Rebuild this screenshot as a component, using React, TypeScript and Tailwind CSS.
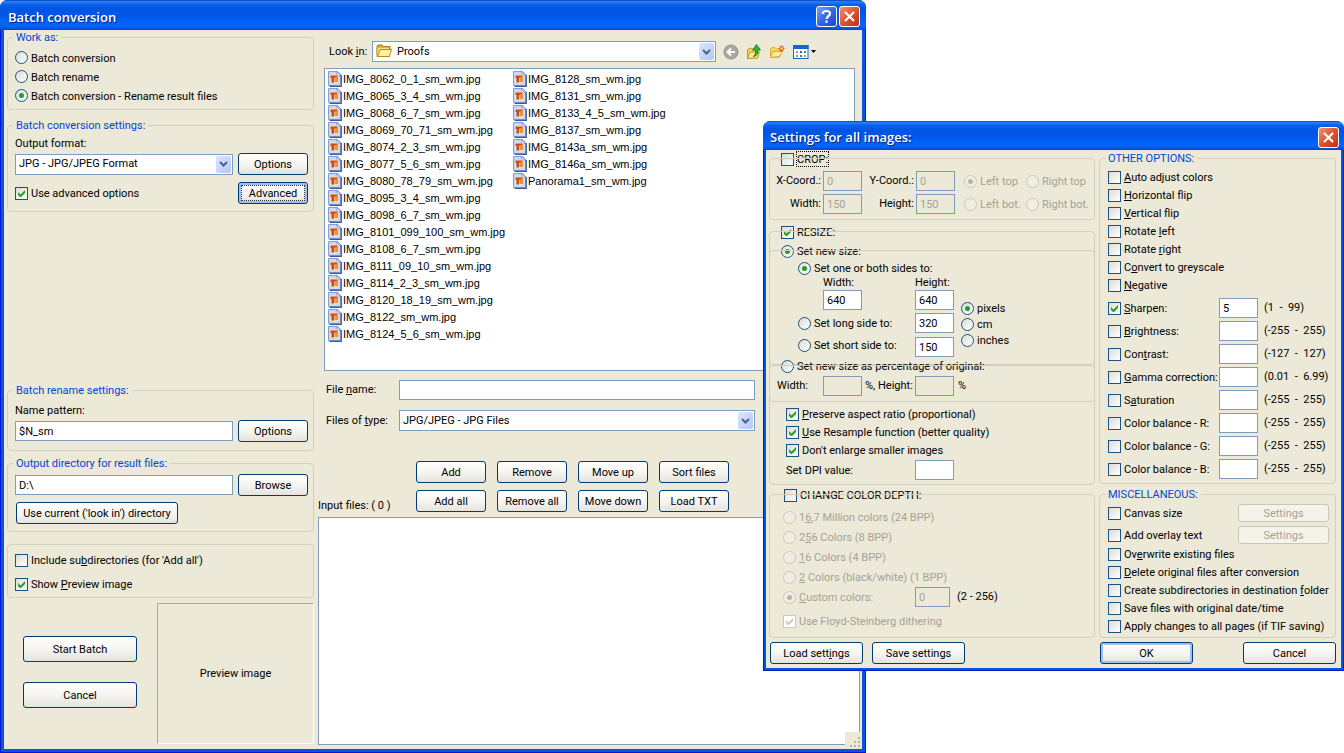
import { useId } from 'react'
import type { ReactNode } from 'react'

const files = [
  'IMG_8062_0_1_sm_wm.jpg', 'IMG_8065_3_4_sm_wm.jpg', 'IMG_8068_6_7_sm_wm.jpg', 'IMG_8069_70_71_sm_wm.jpg',
  'IMG_8074_2_3_sm_wm.jpg', 'IMG_8077_5_6_sm_wm.jpg', 'IMG_8080_78_79_sm_wm.jpg', 'IMG_8095_3_4_sm_wm.jpg',
  'IMG_8098_6_7_sm_wm.jpg', 'IMG_8101_099_100_sm_wm.jpg', 'IMG_8108_6_7_sm_wm.jpg', 'IMG_8111_09_10_sm_wm.jpg',
  'IMG_8114_2_3_sm_wm.jpg', 'IMG_8120_18_19_sm_wm.jpg', 'IMG_8122_sm_wm.jpg', 'IMG_8124_5_6_sm_wm.jpg',
  'IMG_8128_sm_wm.jpg', 'IMG_8131_sm_wm.jpg', 'IMG_8133_4_5_sm_wm.jpg', 'IMG_8137_sm_wm.jpg',
  'IMG_8143a_sm_wm.jpg', 'IMG_8146a_sm_wm.jpg', 'Panorama1_sm_wm.jpg',
]

const flips = ['&Auto adjust colors', '&Horizontal flip', '&Vertical flip', 'Rotate &left', 'Rotate &right', 'C&onvert to greyscale', '&Negative']

const adjustments = [
  { label: '&Sharpen:', value: '5', range: '(1  -  99)', on: true },
  { label: '&Brightness:', value: '', range: '(-255  -  255)' },
  { label: 'Con&trast:', value: '', range: '(-127  -  127)' },
  { label: '&Gamma correction:', value: '', range: '(0.01  -  6.99)' },
  { label: 'S&aturation', value: '', range: '(-255  -  255)' },
  { label: 'Color balance - R:', value: '', range: '(-255  -  255)' },
  { label: 'Color balance - G:', value: '', range: '(-255  -  255)' },
  { label: 'Color balance - B:', value: '', range: '(-255  -  255)' },
]

const misc = ['Ov&erwrite existing files', '&Delete original files after conversion', 'Create subdirectories in destination &folder', 'Save files with original date/time', 'Apply changes to all pages (if TIF saving)']

const depths = ['1&6,7 Million colors (24 BPP)', '2&56 Colors (8 BPP)', '&16 Colors (4 BPP)', '&2 Colors (black/white) (1 BPP)', '&Custom colors:']

// the letter after "&" is the underlined access key
function Mnemonic({ text }: { text: string }) {
  const i = text.indexOf('&')
  if (i < 0) return <>{text}</>
  return <>{text.slice(0, i)}<u className="underline-offset-1">{text[i + 1]}</u>{text.slice(i + 2)}</>
}

type ChoiceProps = { label: string; on?: boolean; disabled?: boolean; focused?: boolean; name?: string; className?: string }

function Check({ label, on, disabled, focused, className = '' }: ChoiceProps) {
  return (
    <label className={`flex items-center gap-[3px] whitespace-nowrap ${disabled ? 'text-[#a5a295]' : ''} ${className}`}>
      <span className="relative flex size-[13px] shrink-0">
        <input type="checkbox" defaultChecked={on} disabled={disabled} className="peer size-[13px] appearance-none border border-[#1c5180] bg-linear-to-br from-[#dcdcd7] to-white disabled:border-[#cac8bb] disabled:from-white" />
        <svg viewBox="0 0 13 13" className={`pointer-events-none absolute inset-0 hidden size-[13px] peer-checked:block ${disabled ? 'text-[#cac8bb]' : 'text-[#21a121]'}`}>
          <path d="M3 5v3l2 2h1l4-4V3L5.500 7.500z" fill="currentColor" />
        </svg>
      </span>
      <span className={`pt-[2px] ${focused ? 'leading-3 outline-1 outline-dotted outline-black' : ''}`}><Mnemonic text={label} /></span>
    </label>
  )
}

function Radio({ label, on, disabled, name, className = '' }: ChoiceProps) {
  return (
    <label className={`flex items-center gap-[3px] whitespace-nowrap ${disabled ? 'text-[#a5a295]' : ''} ${className}`}>
      <span className="relative flex size-[13px] shrink-0">
        <input type="radio" name={name} defaultChecked={on} disabled={disabled} className="peer size-[13px] appearance-none rounded-full border border-[#1c5180] bg-linear-to-br from-[#dcdcd7] to-white disabled:border-[#cac8bb] disabled:from-[#f0eee2] disabled:to-[#f0eee2]" />
        <span className={`pointer-events-none absolute top-1 left-1 hidden size-[5px] rounded-full peer-checked:block ${disabled ? 'bg-[#b5b3a6]' : 'bg-[#21a121]'}`} />
      </span>
      <span className="pt-[2px]"><Mnemonic text={label} /></span>
    </label>
  )
}

function Button({ children, className = '', active, disabled, focused }: { children: ReactNode; className?: string; active?: boolean; disabled?: boolean; focused?: boolean }) {
  const look = disabled
    ? 'border-[#c9c7ba] bg-[#f5f4ea] text-[#a5a295]'
    : 'border-[#003c74] bg-linear-to-b from-white via-[#f6f5f1] to-[#e6e3dc]'
  return (
    <button type="button" disabled={disabled} className={`relative rounded-[3px] border pt-px text-center whitespace-nowrap ${look} ${active ? 'inset-shadow-[0_0_0_2px_#a3bdf0]' : ''} ${className}`}>
      {children}
      {focused && <span className="absolute inset-[2px] border border-dotted border-[#333]" />}
    </button>
  )
}

function TextBox({ value = '', label, id, disabled, className = '' }: { value?: string; label?: string; id?: string; disabled?: boolean; className?: string }) {
  return <input type="text" id={id} aria-label={label} defaultValue={value} disabled={disabled} className={`h-5 min-w-0 border border-[#7f9db9] bg-white px-[3px] disabled:bg-[#ece9d8] disabled:text-[#a5a295] ${className}`} />
}

function Combo({ value, label, id, icon, className = '' }: { value: string; label?: string; id?: string; icon?: ReactNode; className?: string }) {
  return (
    <span className={`relative flex h-[21px] min-w-0 flex-1 ${className}`}>
      <select id={id} aria-label={label} className={`w-full appearance-none border border-[#7f9db9] bg-white ${icon ? 'pl-6' : 'pl-[3px]'}`}>
        <option>{value}</option>
      </select>
      {icon && <span className="pointer-events-none absolute top-[2px] left-1">{icon}</span>}
      <span className="pointer-events-none absolute top-[2px] right-[2px] flex h-[17px] w-[15px] items-center justify-center rounded-[2px] bg-linear-to-br from-[#dbe5fd] to-[#b4c8f6]">
        <svg viewBox="0 0 9 6" className="h-[6px] w-[9px]"><path d="M1 1l3.500 3.500L8 1" fill="none" stroke="#4d6185" strokeWidth="2" /></svg>
      </span>
    </span>
  )
}

function Group({ title, header, children, className = '' }: { title?: string; header?: ReactNode; children: ReactNode; className?: string }) {
  return (
    <fieldset className={`relative min-w-0 border border-transparent ${className}`}>
      {header && <div className="absolute -top-2 left-0">{header}</div>}
      <span className="pointer-events-none absolute -inset-px rounded-[4px] border border-[#d0d0bf]" />
      {title && <legend className="absolute -top-[7px] left-[5px] bg-[#ece9d8] px-[3px] leading-[14px] text-[#0046d5]">{title}</legend>}
      {children}
    </fieldset>
  )
}

function CaptionButton({ kind }: { kind: 'help' | 'close' }) {
  return (
    <button type="button" aria-label={kind} className={`size-[21px] rounded-[3px] border border-white ${kind === 'close' ? 'bg-linear-to-br from-[#f0906f] via-[#e0522c] to-[#b93413]' : 'bg-linear-to-br from-[#7a9ff5] via-[#3567e8] to-[#1c46c5]'}`}>
      {kind === 'close' ? (
        <svg viewBox="0 0 19 19" className="size-[19px]"><path d="M5 5l9 9M14 5l-9 9" stroke="#fff" strokeWidth="2.200" /></svg>
      ) : (
        <svg viewBox="0 0 19 19" className="size-[19px]" fill="none" stroke="#fff" strokeWidth="2.200"><path d="M6 7V6q0-2 3.500-2T13 6.500q0 1.500-1.500 2.500T9.500 12M9.500 13.500v2.300" /></svg>
      )}
    </button>
  )
}

function TitleBar({ title, help, className = '' }: { title: string; help?: boolean; className?: string }) {
  return (
    <header className={`flex items-center gap-[2px] rounded-t-[7px] bg-[linear-gradient(180deg,#0a3fbd_0%,#2b83f5_6%,#0a62ea_14%,#0054e3_30%,#0058ea_55%,#0066fe_80%,#0061f5_90%,#0045c8_100%)] pt-[3px] ${className}`}>
      <h1 className="flex-1 font-['Open_Sans',sans-serif] text-[13px] font-semibold text-white [text-shadow:1px_1px_1px_#0b1f7a]">{title}</h1>
      {help && <CaptionButton kind="help" />}
      <CaptionButton kind="close" />
    </header>
  )
}

function FolderIcon() {
  return (
    <svg viewBox="0 0 16 16" className="size-4">
      <path d="M1 3.500L2 2h4l1.500 1.500H14V6H4L1.500 13z" fill="#e8bf3d" stroke="#a87c12" />
      <path d="M1 13.500V5l1-1h11.500v9.500z" fill="#fbe27a" stroke="#b98d1c" />
      <path d="M1.500 13.500L4 6.500h11.500l-2 7z" fill="#fff0a0" stroke="#b98d1c" />
    </svg>
  )
}

function FileIcon() {
  return (
    <svg viewBox="0 0 14 16" className="h-4 w-[14px] shrink-0">
      <path d="M.5.5h9L12.500 3.500v11H.5z" fill="#c5d9f8" stroke="#7f9fdc" />
      <path d="M9 .5v3.500h3.500z" fill="#fff" stroke="#5f83c6" strokeWidth=".8" />
      <rect x="2" y="3.500" width="8.500" height="9" fill="#f7dcc0" />
      <path d="M2.500 4.500h7v2.500h-7z" fill="#d8481a" />
      <path d="M3.500 7h2.500v4.500H3.500z" fill="#a8553a" />
      <path d="M6.500 6h3.500v5H6.500z" fill="#ef9030" />
      <path d="M13.300 4v11.300H1.500" fill="none" stroke="#3f5a92" strokeWidth="1.200" />
    </svg>
  )
}

function LookInTools() {
  return (
    <div className="ml-[7px] flex items-center gap-[7px]">
      <button type="button" aria-label="Back">
        <svg viewBox="0 0 16 16" className="size-4">
          <circle cx="8" cy="8" r="7" fill="#a8a8a4" stroke="#8e8e8a" />
          <path d="M12 8H5M8 4.500L4.500 8 8 11.500" fill="none" stroke="#fff" strokeWidth="2" />
        </svg>
      </button>
      <button type="button" aria-label="Up one level">
        <svg viewBox="0 0 16 16" className="size-4">
          <path d="M1.500 14.500V5.500L5 4l1.500 1H11v9z" fill="#f5d460" stroke="#c79a20" />
          <path d="M1.500 14.500L4 8h9.500l-2 6z" fill="#fdeb99" stroke="#c79a20" />
          <path d="M7 12.500q3-1 2.500-6.500H6.500L10.500.5l4 5.500h-2.500q.5 6-5 6.500z" fill="#35b32d" stroke="#14761a" strokeWidth=".8" />
        </svg>
      </button>
      <button type="button" aria-label="Create new folder">
        <svg viewBox="0 0 16 16" className="size-4">
          <path d="M1.500 13.500V5L3 3.500h3L7.500 5H11v8z" fill="#f5d460" stroke="#e0a93a" />
          <path d="M1.500 13.500L4 7.500h9.500l-3 5z" fill="#fdeb99" stroke="#e0a93a" />
          <path d="M12.500 1.500v6M9.500 4.500h6M10.500 2.500l4 4M14.500 2.500l-4 4" stroke="#e8581c" strokeWidth="1.200" />
          <circle cx="12.500" cy="4.500" r="1.300" fill="#ffdf70" />
        </svg>
      </button>
      <button type="button" aria-label="View menu" className="ml-px flex items-center gap-[2px]">
        <svg viewBox="0 0 16 16" className="size-4">
          <rect x=".5" y="1.500" width="14.500" height="13" fill="#fff" stroke="#1665d8" />
          <path d="M0 1h15.500v4H0z" fill="#1665d8" />
          <path d="M3 7h2v2H3z" fill="#8d9cb8" /><path d="M7 7h2v2H7z" fill="#2b62c4" /><path d="M11 7h2v2h-2z" fill="#39a23a" />
          <path d="M3 11h2v2H3z" fill="#8d9cb8" /><path d="M7 11h2v2H7z" fill="#3e9a4a" /><path d="M11 11h2v2h-2z" fill="#d8a021" />
        </svg>
        <svg viewBox="0 0 5 3" className="h-[3px] w-[5px]"><path d="M0 0h5L2.500 3z" /></svg>
      </button>
    </div>
  )
}

function BatchWindow() {
  const id = useId()
  return (
    <section className="mr-[478px] flex min-h-screen flex-col rounded-t-[8px] bg-[#0019cf]">
      <TitleBar title="Batch conversion" help className="h-[30px] pr-[6px] pl-2" />
      <div className="mx-px mb-px flex flex-1 border-x-[3px] border-b-[3px] border-[#0855dd] bg-[#ece9d8]">
        <div className="flex w-[310px] shrink-0 flex-col pt-[7px] pl-[3px]">
          <Group title="Work as:" className="pt-[10px] pb-1 pl-[7px]">
            <Radio name="work" label="Batch conversion" className="h-[19px]" />
            <Radio name="work" label="Batch rename" className="h-[19px]" />
            <Radio name="work" label="Batch conversion - Rename result files" on className="h-[19px]" />
          </Group>
          <Group title="Batch conversion settings:" className="mt-[15px] pt-[9px] pr-[5px] pb-[7px] pl-[7px]">
            <label htmlFor={id + 'fmt'} className="block h-4 pt-px">Output format:</label>
            <div className="mt-[2px] flex items-center gap-[5px]">
              <Combo id={id + 'fmt'} value="JPG - JPG/JPEG Format" />
              <Button className="h-[22px] w-[70px]">Options</Button>
            </div>
            <div className="mt-[7px] flex items-center justify-between">
              <Check label="Use advanced options" on />
              <Button active focused className="h-[22px] w-[70px]">Advanced</Button>
            </div>
          </Group>
          <Group title="Batch rename settings:" className="mt-[178px] pt-[11px] pr-[5px] pb-2 pl-[7px]">
            <label htmlFor={id + 'pat'} className="block h-4 pt-px">Name pattern:</label>
            <div className="mt-[2px] flex items-center gap-[5px]">
              <TextBox id={id + 'pat'} value="$N_sm" className="flex-1" />
              <Button className="h-[22px] w-[70px]">Options</Button>
            </div>
          </Group>
          <Group title="Output directory for result files:" className="mt-3 pt-[10px] pr-[5px] pb-[7px] pl-[7px]">
            <div className="flex items-center gap-[5px]">
              <TextBox label="Output directory" value="D:\" className="flex-1" />
              <Button className="h-[22px] w-[70px]">Browse</Button>
            </div>
            <Button className="mt-[6px] ml-px h-[22px] w-[162px]">Use current ('look in') directory</Button>
          </Group>
          <Group className="mt-3 pt-[3px] pb-px pl-[7px]">
            <Check label="Include su&bdirectories (for 'Add all')" className="h-6" />
            <Check label="Show &Preview image" on className="h-6" />
          </Group>
          <div className="mt-[5px] mb-[5px] flex flex-1">
            <div className="flex flex-1 flex-col items-center gap-5 pt-[33px] pr-1">
              <Button className="h-[26px] w-[114px]">Start Batch</Button>
              <Button className="h-[26px] w-[114px]">Cancel</Button>
            </div>
            <div className="flex w-[157px] items-center justify-center border border-t-[#aca899] border-r-white border-b-white border-l-[#aca899] pt-px">Preview image</div>
          </div>
        </div>

        <div className="relative flex min-w-0 flex-1 flex-col pt-[11px] pl-1">
          <div className="flex items-center pr-[46px] pl-[11px]">
            <label htmlFor={id + 'look'} className="w-[43px]"><Mnemonic text="Look &in:" /></label>
            <Combo id={id + 'look'} value="Proofs" icon={<FolderIcon />} />
            <LookInTools />
          </div>
          <ul className="mt-[6px] mr-[7px] ml-[6px] grid h-[303px] auto-cols-[185px] grid-flow-col grid-rows-[repeat(16,17px)] border border-[#7f9db9] bg-white pt-px pl-[3px] font-['Liberation_Sans',sans-serif]">
            {files.map((f) => (
              <li key={f} className="flex items-center gap-px whitespace-nowrap"><FileIcon />{f}</li>
            ))}
          </ul>
          <div className="mt-[9px] mr-[107px] flex items-center pl-2">
            <label htmlFor={id + 'file'} className="w-[73px]"><Mnemonic text="File &name:" /></label>
            <TextBox id={id + 'file'} className="flex-1" />
          </div>
          <div className="mt-[10px] mr-[107px] flex items-center pl-2">
            <label htmlFor={id + 'type'} className="w-[73px]"><Mnemonic text="Files of &type:" /></label>
            <Combo id={id + 'type'} value="JPG/JPEG - JPG Files" />
          </div>
          <div className="mt-[30px] flex items-end">
            <h2 className="w-[98px] leading-3">Input files: ( 0 )</h2>
            <div className="grid grid-cols-[repeat(4,70px)] gap-x-[11px] gap-y-[7px]">
              {['Add', 'Remove', 'Move up', 'Sort files', 'Add all', 'Remove all', 'Move down', 'Load TXT'].map((b) => (
                <Button key={b} className="h-[22px]">{b}</Button>
              ))}
            </div>
          </div>
          <div className="mt-[5px] mr-[2px] mb-1 flex-1 border border-[#7f9db9] bg-white" />
          <svg viewBox="0 0 17 17" className="absolute right-0 bottom-0 size-[17px] bg-[#ece9d8]">
            <path d="M13 5h2v2h-2zM9 9h2v2H9zM13 9h2v2h-2zM5 13h2v2H5zM9 13h2v2H9zM13 13h2v2h-2z" fill="#b8b4a3" />
          </svg>
        </div>
      </div>
    </section>
  )
}

function CropGroup() {
  return (
    <Group header={<Check label="CROP:" focused className="h-4 pl-[11px]" />} className="flex flex-col gap-[3px] pt-3 pb-[5px]">
      {[
        { a: 'X-Coord.:', b: 'Y-Coord.:', v: '0', l: 'Left top', r: 'Right top', on: true },
        { a: 'Width:', b: 'Height:', v: '150', l: 'Left bot.', r: 'Right bot.', on: false },
      ].map((f) => (
        <div key={f.a} className="flex items-center">
          <span className="w-[51px] text-right">{f.a}</span>
          <TextBox label={f.a} value={f.v} disabled className="ml-[2px] w-[39px]" />
          <span className="w-[52px] text-right">{f.b}</span>
          <TextBox label={f.b} value={f.v} disabled className="ml-[2px] w-[39px]" />
          <Radio name="corner" label={f.l} on={f.on} disabled className="ml-[9px] w-[62px]" />
          <Radio name="corner" label={f.r} disabled />
        </div>
      ))}
    </Group>
  )
}

function ResizeGroup() {
  return (
    <Group header={<Check label="RESIZE:" on className="h-4 pl-[11px]" />} className="mt-[11px] pt-[18px] pb-1">
      <Group header={<Radio name="size" label="Set new size:" on className="h-4 pl-[11px]" />} className="-mx-px flex pt-[9px] pb-[7px]">
        <div className="w-[191px] pl-7">
          <Radio name="side" label="Set one or both sides to:" on className="h-4" />
          <div className="flex pl-[25px] leading-[13px]">
            <span className="w-[92px]">Width:</span>
            <span>Height:</span>
          </div>
          <div className="mt-px flex gap-[53px] pl-[25px]">
            <TextBox label="Width" value="640" className="w-[39px]" />
            <TextBox label="Height" value="640" className="w-[39px]" />
          </div>
          <div className="mt-[3px] flex items-center">
            <Radio name="side" label="Set long side to:" className="w-[117px]" />
            <TextBox label="Long side" value="320" className="w-[39px]" />
          </div>
          <div className="mt-1 flex items-start">
            <Radio name="side" label="Set short side to:" className="h-4 w-[117px]" />
            <TextBox label="Short side" value="150" className="w-[39px]" />
          </div>
        </div>
        <div className="pt-10">
          <Radio name="unit" label="pixels" on className="h-4" />
          <Radio name="unit" label="cm" className="h-4" />
          <Radio name="unit" label="inches" className="h-4" />
        </div>
      </Group>
      <Group header={<Radio name="size" label="Set new size as percentage of original:" className="h-4 pl-[11px]" />} className="-mx-px flex items-center pt-[10px] pb-[5px] pl-[7px]">
        <span className="w-[46px]">Width:</span>
        <TextBox label="Width percent" disabled className="w-[39px]" />
        <span className="w-[53px] pl-[3px] whitespace-nowrap">%, Height:</span>
        <TextBox label="Height percent" disabled className="w-[39px]" />
        <span className="pl-1">%</span>
      </Group>
      <div className="pt-[3px] pl-4">
        <Check label="&Preserve aspect ratio (proportional)" on className="h-[18px]" />
        <Check label="&Use Resample function (better quality)" on className="h-[18px]" />
        <Check label="Don't enlarge smaller images" on className="h-[18px]" />
        <label className="mt-px flex items-center">
          <span className="w-[129px] pt-[2px]">Set DPI value:</span>
          <TextBox className="w-[39px]" />
        </label>
      </div>
    </Group>
  )
}

function DepthGroup() {
  return (
    <Group header={<Check label="CHANGE COLOR DEPTH:" className="h-4 pl-[14px]" />} className="mt-[9px] pt-3 pb-[6px] pl-[13px]">
      {depths.map((d, i) => (
        <div key={d} className="flex h-5 items-center">
          <Radio name="depth" label={d} on={i === 4} disabled className="w-[132px]" />
          {i === 4 && (
            <>
              <TextBox label="Custom colors" value="0" disabled className="w-[35px]" />
              <span className="pl-[7px]">(2 - 256)</span>
            </>
          )}
        </div>
      ))}
      <Check label="Use Floyd-Steinberg dithering" on disabled className="mt-1 h-5" />
    </Group>
  )
}

function SettingsDialog() {
  return (
    <section role="dialog" aria-label="Settings for all images" className="absolute top-[121px] right-0 left-[763px] flex flex-col rounded-t-[8px] bg-[#0019cf]">
      <TitleBar title="Settings for all images:" className="h-[29px] pr-[5px] pl-[7px]" />
      <div className="mx-px mb-px border-x-2 border-b-2 border-[#0855dd] bg-[#ece9d8] pt-2 pr-[5px] pb-1 pl-[3px]">
        <div className="flex gap-1">
          <div className="min-w-0 flex-1">
            <CropGroup />
            <ResizeGroup />
            <DepthGroup />
          </div>
          <div className="flex w-[237px] shrink-0 flex-col">
            <Group title="OTHER OPTIONS:" className="pt-[9px] pb-1 pl-2">
              {flips.map((f) => <Check key={f} label={f} className="h-[18px]" />)}
              <div className="mt-1 flex flex-col gap-[3px]">
                {adjustments.map((a) => (
                  <div key={a.label} className="flex items-center">
                    <Check label={a.label} on={a.on} className="w-[111px]" />
                    <TextBox label={a.label.replace('&', '')} value={a.value} className="w-[39px]" />
                    <span className="pl-[6px] whitespace-pre">{a.range}</span>
                  </div>
                ))}
              </div>
            </Group>
            <Group title="MISCELLANEOUS:" className="mt-auto pt-[9px] pr-[6px] pb-[2px] pl-2">
              <div className="flex flex-col gap-1 pb-px">
                {['Canvas size', 'Add overlay text'].map((m) => (
                  <div key={m} className="flex items-center justify-between">
                    <Check label={m} />
                    <Button disabled className="h-[18px] w-[91px] leading-4">Settings</Button>
                  </div>
                ))}
              </div>
              {misc.map((m) => <Check key={m} label={m} className="h-[18px]" />)}
            </Group>
          </div>
        </div>
        <footer className="mt-1 flex gap-[9px] pl-px">
          <Button className="h-[22px] w-[93px]"><Mnemonic text="Load sett&ings" /></Button>
          <Button className="h-[22px] w-[93px]">Save settings</Button>
          <div className="ml-auto flex w-[236px] justify-between">
            <Button active className="h-[22px] w-[93px]">OK</Button>
            <Button className="h-[22px] w-[93px]">Cancel</Button>
          </div>
        </footer>
      </div>
    </section>
  )
}

export default function App() {
  return (
    <main className="relative min-h-screen bg-white font-[Roboto,'Liberation_Sans',sans-serif] text-[11px] leading-4 text-black">
      <BatchWindow />
      <SettingsDialog />
    </main>
  )
}
